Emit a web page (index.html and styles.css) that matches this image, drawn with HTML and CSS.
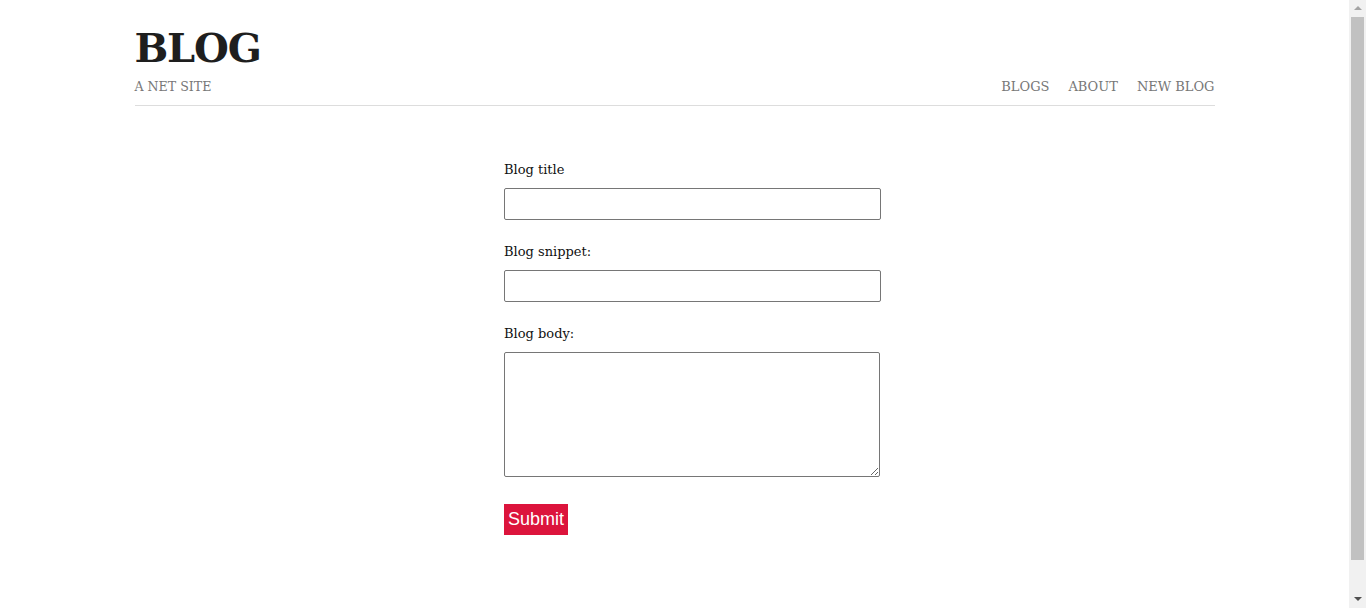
FILE: index.html
```html
<!DOCTYPE html>
<html lang="en">
<head>
<meta charset="utf-8">
<title>Blog</title>
<link rel="stylesheet" href="styles.css">
</head>
<body>
<div class="container">
  <header class="site-header">
    <div class="brand">
      <h1 class="logo">BLOG</h1>
      <p class="tagline">A NET SITE</p>
    </div>
    <nav class="nav">
      <a href="#">BLOGS</a>
      <a href="#">ABOUT</a>
      <a href="#">NEW BLOG</a>
    </nav>
  </header>
  <main class="create">
    <form class="blog-form">
      <label class="field-label" for="title">Blog title</label>
      <input class="field" type="text" id="title">
      <label class="field-label" for="snippet">Blog snippet:</label>
      <input class="field" type="text" id="snippet">
      <label class="field-label" for="body">Blog body:</label>
      <textarea class="field area" id="body"></textarea>
      <button class="submit" type="button">Submit</button>
    </form>
  </main>
</div>
<div class="scrollbar" aria-hidden="true">
  <span class="arrow up"></span>
  <span class="thumb"></span>
  <span class="arrow down"></span>
</div>
</body>
</html>
```
FILE: styles.css
```css
html, body {
  margin: 0;
  padding: 0;
  background: #fff;
}
body {
  font-family: "DejaVu Serif", "Liberation Serif", serif;
  color: #222;
  padding-right: 17px;
  overflow: hidden;
}
.container {
  max-width: 1080px;
  margin: 0 auto;
}
.site-header {
  display: flex;
  justify-content: space-between;
  align-items: flex-end;
  border-bottom: 1px solid #ddd;
  padding: 22px 0 9px;
}
.logo {
  margin: 0;
  font-size: 40px;
  letter-spacing: -1.2px;
  line-height: 52px;
  font-weight: bold;
  color: #1e1e1e;
}
.tagline {
  margin: 4px 0 0;
  font-size: 12.6px;
  line-height: 18px;
  color: #777;
}
.nav {
  display: flex;
  gap: 19px;
}
.nav a {
  font-size: 13px;
  line-height: 18px;
  color: #777;
  text-decoration: none;
}
.create {
  padding-top: 55px;
}
.blog-form {
  width: 377px;
  margin: 0 auto;
  display: flex;
  flex-direction: column;
  align-items: flex-start;
  position: relative;
  left: 18px;
}
.field-label {
  font-size: 13px;
  line-height: 18px;
  color: #111;
  margin-bottom: 9px;
}
.field {
  box-sizing: border-box;
  width: 377px;
  height: 32px;
  border: 1px solid #767676;
  border-radius: 2px;
  margin: 0 0 23px;
  padding: 4px 8px;
  font-family: inherit;
}
.area {
  width: 376px;
  height: 125px;
  margin-bottom: 27px;
  resize: vertical;
}
.submit {
  background: #dc143c;
  color: #fff;
  border: 0;
  border-radius: 0;
  font-family: "Liberation Sans", Arial, sans-serif;
  font-size: 18px;
  width: 64px;
  height: 31px;
  padding: 0;
}
.scrollbar {
  position: fixed;
  top: 0;
  right: 0;
  width: 17px;
  height: 100%;
  background: #f1f1f1;
  display: flex;
  flex-direction: column;
  align-items: center;
}
.arrow {
  width: 0;
  height: 0;
  border-left: 4px solid transparent;
  border-right: 4px solid transparent;
}
.arrow.up {
  margin-top: 6px;
  border-bottom: 4px solid #a3a3a3;
}
.thumb {
  width: 13px;
  height: 543px;
  margin-top: 7px;
  background: #c1c1c1;
}
.arrow.down {
  margin-top: 37px;
  border-top: 4px solid #505050;
}
```
